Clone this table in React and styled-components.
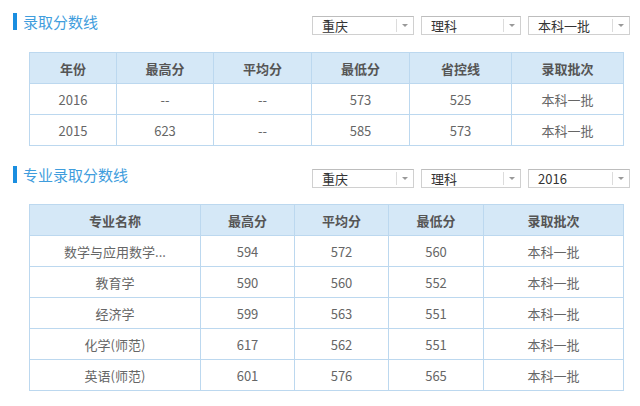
import React from "react";
import styled, { createGlobalStyle } from "styled-components";

const Global = createGlobalStyle`
  html, body { margin: 0; padding: 0; background: #fff; }
  body { font-family: "Noto Sans CJK SC", "Noto Sans", sans-serif; }
`;

const Page = styled.div`
  width: 640px;
  padding-top: 13px;
`;

const Section = styled.section`
  margin-bottom: ${(p) => p.$gap || 0}px;
`;

const HeaderRow = styled.div`
  display: flex;
  justify-content: space-between;
  align-items: flex-start;
  padding: 0 10px 0 13px;
  margin-bottom: ${(p) => p.$below}px;
`;

const Title = styled.h2`
  margin: 0;
  display: flex;
  align-items: center;
  gap: 6px;
  height: 17px;
  font-size: 15px;
  font-weight: normal;
  color: #3f9ddd;
  line-height: 17px;
  &::before {
    content: "";
    display: block;
    width: 4px;
    height: 17px;
    background: #1a8ee0;
  }
`;

const Selects = styled.div`
  display: flex;
  gap: 7px;
  margin-top: 3px;
`;

const SelectBox = styled.div`
  width: ${(p) => p.$w}px;
  height: 19px;
  box-sizing: border-box;
  border: 1px solid #d0d0d0;
  border-top-color: #bdbdbd;
  display: flex;
  align-items: center;
  font-size: 13px;
  color: #333;
  background: #fff;
`;

const SelectText = styled.span`
  flex: 1;
  padding-left: 9px;
  line-height: 17px;
`;

const Arrow = styled.span`
  width: 16px;
  height: 13px;
  border-left: 1px solid #dcdcdc;
  display: flex;
  align-items: center;
  justify-content: center;
  &::after {
    content: "";
    border-left: 3px solid transparent;
    border-right: 3px solid transparent;
    border-top: 3px solid #999;
  }
`;

const Table = styled.table`
  margin-left: 29px;
  width: 594px;
  border-collapse: collapse;
  table-layout: fixed;
  border: 1px solid #bcd8ef;
  font-size: 13px;
`;

const Th = styled.th`
  background: #d5e8f7;
  border: 1px solid #bcd8ef;
  height: 30px;
  padding: 0;
  font-weight: bold;
  color: #555;
  text-align: center;
`;

const Td = styled.td`
  border: 1px solid #bcd8ef;
  height: 30px;
  padding: 0;
  color: #666;
  text-align: center;
`;

function Select({ w, value }) {
  return (
    <SelectBox $w={w}>
      <SelectText>{value}</SelectText>
      <Arrow />
    </SelectBox>
  );
}

const t1Cols = [87, 97, 98, 98, 102, 112];
const t1Head = ["年份", "最高分", "平均分", "最低分", "省控线", "录取批次"];
const t1Rows = [
  ["2016", "--", "--", "573", "525", "本科一批"],
  ["2015", "623", "--", "585", "573", "本科一批"],
];

const t2Cols = [171, 94, 94, 95, 140];
const t2Head = ["专业名称", "最高分", "平均分", "最低分", "录取批次"];
const t2Rows = [
  ["数学与应用数学...", "594", "572", "560", "本科一批"],
  ["教育学", "590", "560", "552", "本科一批"],
  ["经济学", "599", "563", "551", "本科一批"],
  ["化学(师范)", "617", "562", "551", "本科一批"],
  ["英语(师范)", "601", "576", "565", "本科一批"],
];

function DataTable({ cols, head, rows }) {
  return (
    <Table>
      <colgroup>
        {cols.map((w, i) => (
          <col key={i} style={{ width: w }} />
        ))}
      </colgroup>
      <thead>
        <tr>
          {head.map((h) => (
            <Th key={h}>{h}</Th>
          ))}
        </tr>
      </thead>
      <tbody>
        {rows.map((r, i) => (
          <tr key={i}>
            {r.map((c, j) => (
              <Td key={j}>{c}</Td>
            ))}
          </tr>
        ))}
      </tbody>
    </Table>
  );
}

export default function App() {
  return (
    <Page>
      <Global />
      <Section $gap={20}>
        <HeaderRow $below={17}>
          <Title>录取分数线</Title>
          <Selects>
            <Select w={102} value="重庆" />
            <Select w={100} value="理科" />
            <Select w={102} value="本科一批" />
          </Selects>
        </HeaderRow>
        <DataTable cols={t1Cols} head={t1Head} rows={t1Rows} />
      </Section>
      <Section>
        <HeaderRow $below={16}>
          <Title>专业录取分数线</Title>
          <Selects>
            <Select w={102} value="重庆" />
            <Select w={100} value="理科" />
            <Select w={102} value="2016" />
          </Selects>
        </HeaderRow>
        <DataTable cols={t2Cols} head={t2Head} rows={t2Rows} />
      </Section>
    </Page>
  );
}
